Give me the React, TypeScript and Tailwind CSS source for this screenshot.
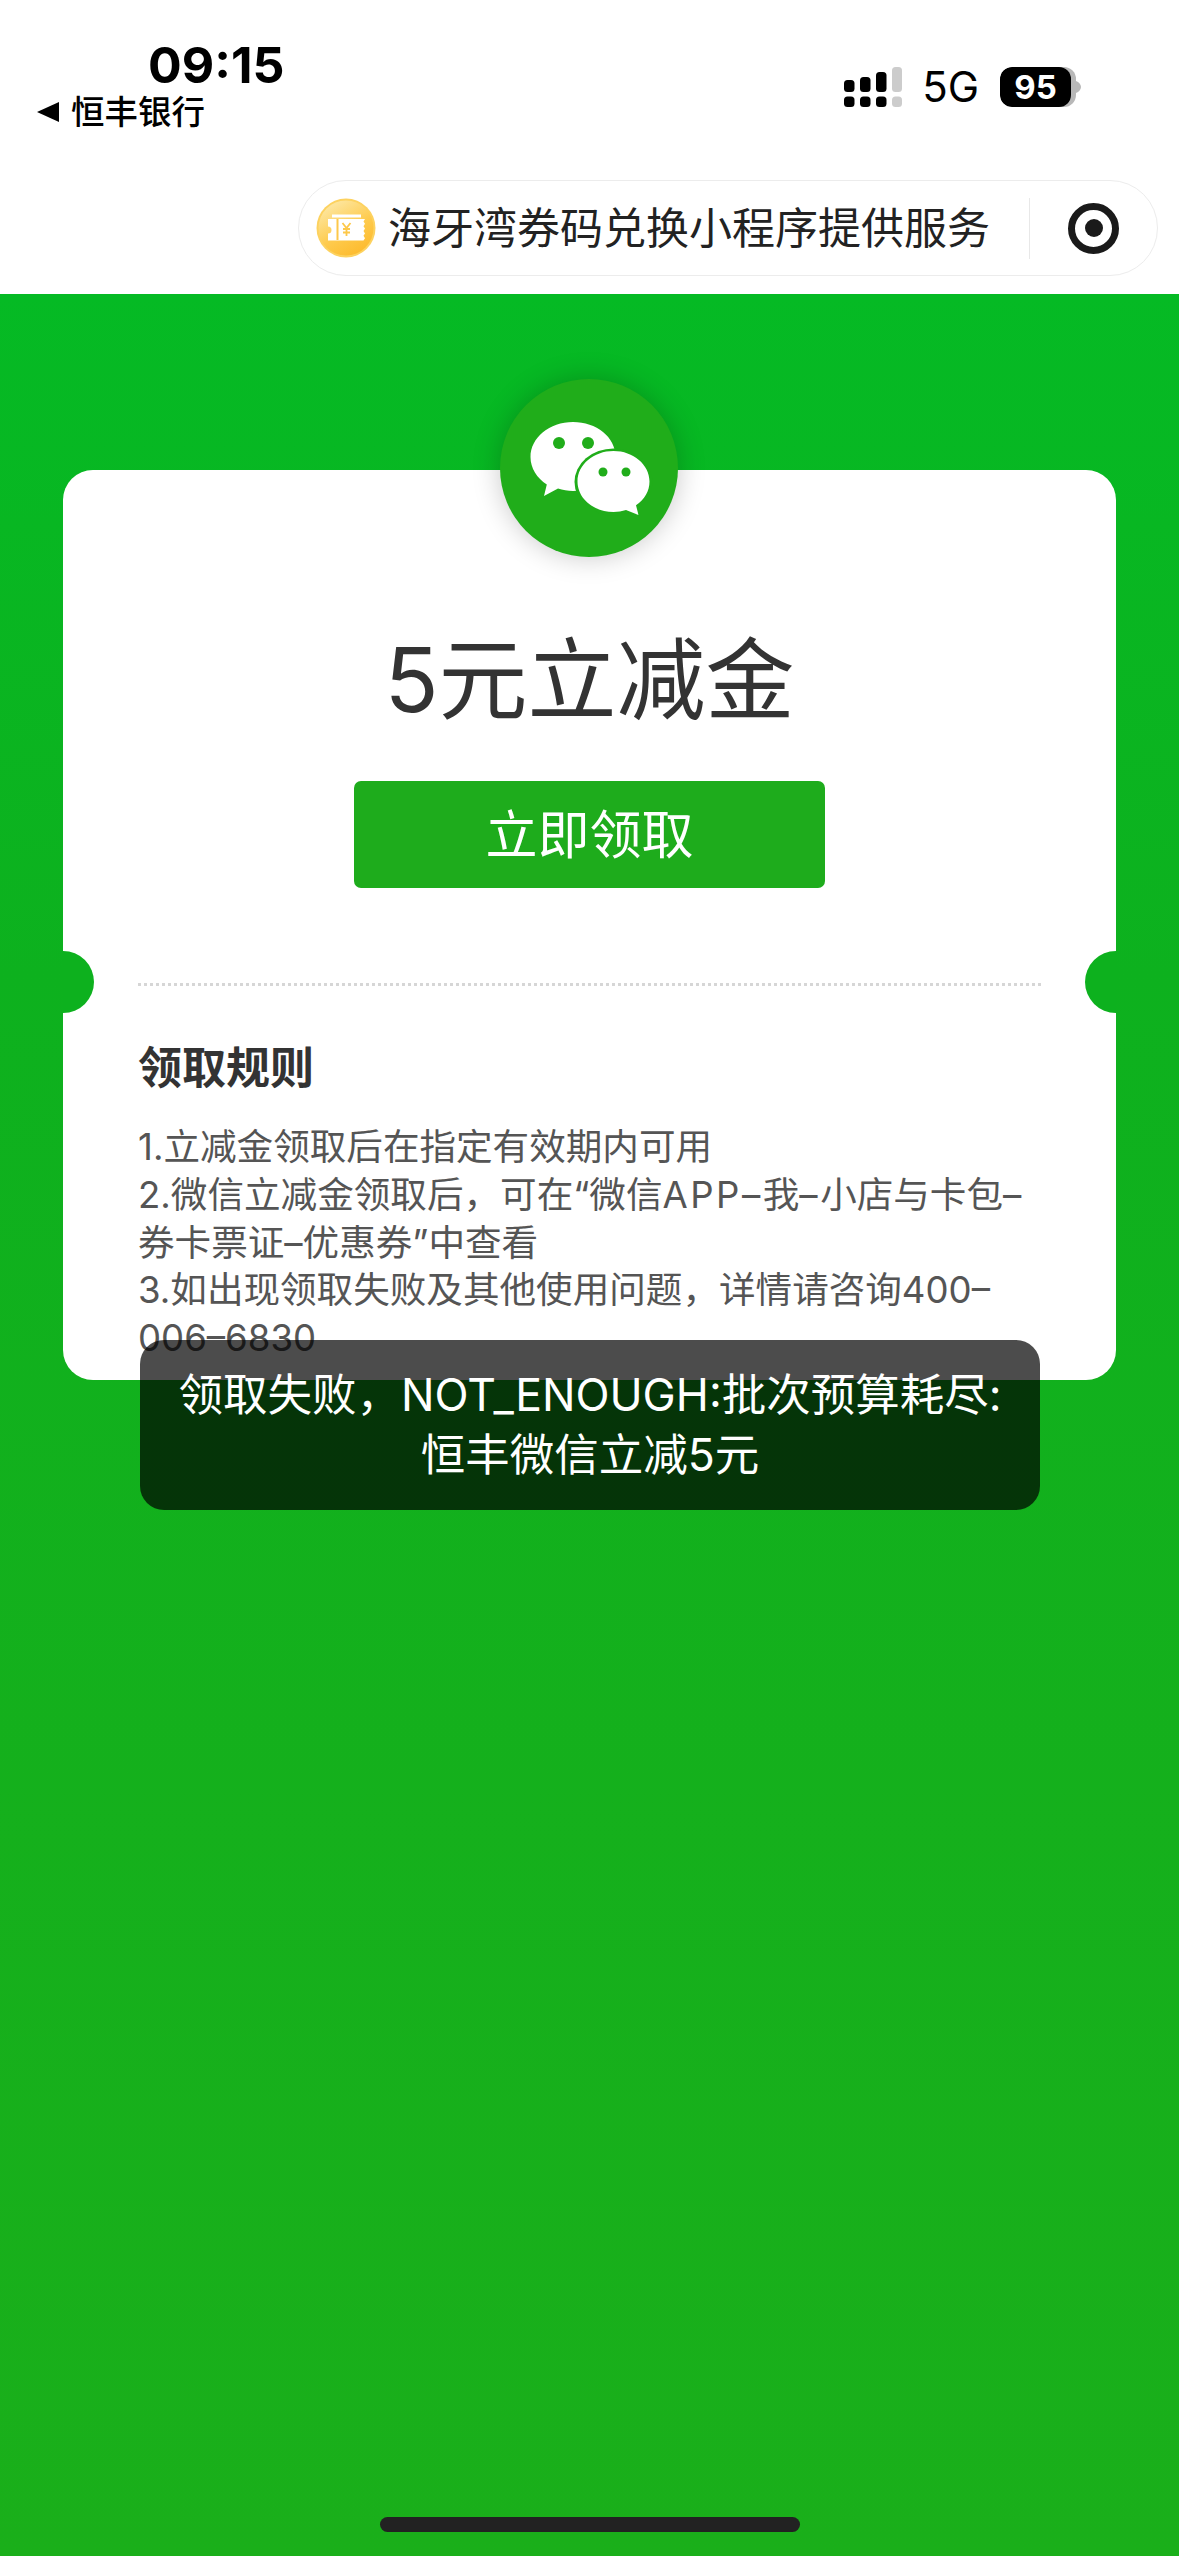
import React from 'react';

const FONT = '[font-family:Inter,"Noto_Sans_CJK_SC",sans-serif]';

const SignalIcon = () => (
  <svg width="58" height="40" viewBox="0 0 58 40" className="shrink-0">
    <rect x="0" y="13" width="10.500" height="12" rx="3.500" fill="#000" />
    <rect x="16" y="10" width="10.500" height="15" rx="3.500" fill="#000" />
    <rect x="32" y="5" width="10.500" height="20" rx="3.500" fill="#000" />
    <rect x="48" y="0" width="10" height="25" rx="3.500" fill="#ccc" />
    <rect x="0" y="29.500" width="10.500" height="10.500" rx="3.500" fill="#000" />
    <rect x="16" y="29.500" width="10.500" height="10.500" rx="3.500" fill="#000" />
    <rect x="32" y="29.500" width="10.500" height="10.500" rx="3.500" fill="#000" />
    <rect x="48" y="29.500" width="10" height="10.500" rx="3.500" fill="#ccc" />
  </svg>
);

const CoinIcon = () => (
  <svg width="60" height="60" viewBox="0 0 60 60" className="shrink-0">
    <defs>
      <linearGradient id="coin" x1="0.2" y1="0" x2="0.8" y2="1">
        <stop offset="0" stopColor="#fde9a8" />
        <stop offset="0.55" stopColor="#fecb4e" />
        <stop offset="1" stopColor="#fdb92a" />
      </linearGradient>
    </defs>
    <circle cx="30" cy="30" r="29.500" fill="#fdd25f" />
    <circle cx="30" cy="30" r="27.500" fill="url(#coin)" />
    <path
      d="M12 21h37l-1.500 2.400 1.500 2.400-1.500 2.400 1.500 2.400-1.500 2.400 1.500 2.400-1.500 2.400 1.500 2.400-1.500 2.400H12v-7a3.500 3.500 0 0 0 0-7z"
      fill="#fff"
    />
    <rect x="16" y="16.500" width="29" height="3" fill="#fff" />
    <rect x="20.500" y="21" width="2" height="21" fill="#fdc84a" />
    <path d="M26.500 25l4 5 4-5M30.500 30v8M27 31h7M27 34.500h7" stroke="#fdc84a" strokeWidth="1.800" fill="none" />
  </svg>
);

const WechatLogo = () => (
  <svg width="178" height="178" viewBox="0 0 178 178">
    <path d="M73 43c-23.500 0-42.500 15.700-42.500 35 0 11.200 6.400 21 16.300 27.500L44 117l14-7.500c4.700 1.300 9.800 2.500 15 2.500 23.500 0 42.500-15.200 42.500-34.500S96.500 43 73 43z" fill="#fff" />
    <ellipse cx="113.500" cy="103" rx="39" ry="33.500" fill="#20ad1a" />
    <path d="M113.500 72c-19.800 0-36 13.500-36 30.500s16.200 30.500 36 30.500c4.400 0 8.600-.6 12.500-1.900l12.500 4.900-2.500-9.800c8.600-5.600 13.500-14.200 13.500-23.700C149.500 85.500 133.300 72 113.500 72z" fill="#fff" />
    <circle cx="59" cy="64" r="6" fill="#20ad1a" />
    <circle cx="88" cy="64" r="6" fill="#20ad1a" />
    <circle cx="103" cy="93" r="4.500" fill="#20ad1a" />
    <circle cx="126" cy="93" r="4.500" fill="#20ad1a" />
  </svg>
);

const App: React.FC = () => {
  return (
    <div className={`${FONT} relative w-[1179px] h-[2556px] flex flex-col overflow-hidden bg-white`}>
      <header className="h-[294px] shrink-0 bg-white flex flex-col">
        <div className="h-[180px] flex items-start justify-between">
          <div className="flex flex-col pl-[37px] pt-[36px]">
            <span className="pl-[111px] text-[50px] leading-[58px] font-bold text-black">09:15</span>
            <div className="flex items-center gap-[12px] text-black">
              <span className="w-0 h-0 border-y-[10px] border-y-transparent border-r-[22px] border-r-black" />
              <span className="text-[33.500px] leading-[36px] font-medium">恒丰银行</span>
            </div>
          </div>
          <div className="flex items-center pt-[67px] pr-[98px]">
            <div className="ml-[2px]">
              <SignalIcon />
            </div>
            <span className="ml-[20px] text-[42px] leading-[40px] text-black">5G</span>
            <div className="ml-[21px] flex items-center">
              <div className="relative w-[76px] h-[40px] rounded-[12px] bg-[#b8b8b8] overflow-hidden">
                <div className="absolute inset-y-0 left-0 w-[71px] bg-black rounded-[12px] flex items-center justify-center">
                  <span className="text-[33px] font-bold text-white leading-none">95</span>
                </div>
              </div>
              <svg width="5" height="12" viewBox="0 0 5 12" className="shrink-0">
                <path d="M0 0c3 1 5 3.500 5 6s-2 5-5 6z" fill="#b8b8b8" />
              </svg>
            </div>
          </div>
        </div>
        <div className="flex justify-end pr-[21px]">
          <div className="w-[860px] h-[96px] rounded-full border border-[#ececec] bg-white flex items-center pl-[17px]">
            <CoinIcon />
            <span className="ml-[12px] text-[43px] leading-none text-[#222] whitespace-nowrap">海牙湾券码兑换小程序提供服务</span>
            <div className="ml-[39px] w-px h-[61px] bg-[#e8e8e8]" />
            <div className="ml-[38px] w-[51px] h-[51px] rounded-full border-[7px] border-[#1a1a1a] flex items-center justify-center">
              <div className="w-[18px] h-[18px] rounded-full bg-[#1a1a1a]" />
            </div>
          </div>
        </div>
      </header>

      <main className="relative flex-1 px-[63px] pt-[176px] bg-linear-to-b from-[#05ba24] via-[#0db11e] via-30% to-[#1aaf1a]">
        <div className="relative h-[910px] rounded-[30px] bg-white">
          <div className="absolute left-[437px] -top-[91px] w-[178px] h-[178px] rounded-full bg-[#20ad1a] shadow-[0_0_28px_rgba(0,0,0,0.22)]">
            <WechatLogo />
          </div>
          <div className="absolute left-0 top-[481px] w-[31px] h-[62px] rounded-r-full bg-[#0db11e]" />
          <div className="absolute right-0 top-[481px] w-[31px] h-[62px] rounded-l-full bg-[#0db11e]" />

          <div className="flex flex-col items-center pt-[162px]">
            <h1 className="text-[89px] leading-[96px] text-[#333] font-normal">5元立减金</h1>
            <button className="mt-[53px] w-[471px] h-[107px] pt-[3px] rounded-[7px] bg-[#1eac1c] text-white text-[52px]">立即领取</button>
          </div>

          <div className="mx-[75px] mt-[95px] border-t-[3px] border-dotted border-[#d6d6d6]" />

          <div className="px-[75px] pt-[52px]">
            <h2 className="text-[44px] leading-[60px] font-semibold text-[#333]">领取规则</h2>
            <div className="mt-[26px] text-[36.600px] leading-[47.800px] text-[#555]">
              <p>1.立减金领取后在指定有效期内可用</p>
              <p>
                2.微信立减金领取后，可在“微信<span className="tracking-[2.500px]">APP–</span>我<span className="tracking-[2.500px]">–</span>小店与卡包<span className="tracking-[2.500px]">–</span>券卡票证–优惠券”中查看
              </p>
              <p>3.如出现领取失败及其他使用问题，详情请咨询400–006–6830</p>
            </div>
          </div>

          <div className="absolute left-[77px] top-[870px] w-[900px] h-[170px] rounded-[24px] bg-black/70 flex items-center justify-center px-[30px] text-center text-white text-[44.500px] leading-[60px]">
            领取失败，NOT_ENOUGH:批次预算耗尽:<br />恒丰微信立减5元
          </div>
        </div>
        <div className="absolute left-[380px] bottom-[24px] w-[420px] h-[15px] rounded-full bg-[#222]" />
      </main>
    </div>
  );
};

export default App;
